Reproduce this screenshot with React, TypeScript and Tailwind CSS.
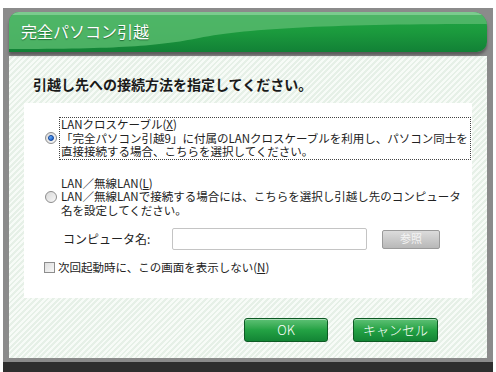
import React from "react";

const font = { fontFamily: '"Noto Sans CJK JP", "Noto Sans", sans-serif' };

function Radio({ checked }: { checked?: boolean }) {
  return (
    <div className="w-[12px] h-[12px] rounded-full border border-[#8d8d8d] bg-gradient-to-br from-[#d8d8d8] to-[#f8f8f8] flex items-center justify-center shrink-0">
      {checked && (
        <div className="w-[6px] h-[6px] rounded-full bg-gradient-to-br from-[#7fc0ff] to-[#0a55c8] border border-[#0a3f99]" />
      )}
    </div>
  );
}

export default function App() {
  return (
    <div className="w-[496px] h-[372px] bg-white overflow-hidden" style={font}>
      <div className="mt-[8px] ml-[3px] w-[490px] h-[364px] bg-[#8b8b8b] flex flex-col px-[6px] pt-[4px]">
        {/* title bar */}
        <div className="relative h-[40px] rounded-tl-[10px] rounded-tr-[14px] rounded-br-[10px] overflow-hidden bg-gradient-to-b from-[#22a646] via-[#1b9a3d] to-[#128136] shadow-[0_3px_3px_rgba(0,0,0,0.35)]">
          <svg className="absolute inset-0" width="480" height="40" viewBox="0 0 480 40" preserveAspectRatio="none">
            <path d="M0 0 H480 V12 C330 12 240 16 190 26 C150 34 110 37 0 37 Z" fill="#56b96c" opacity="0.85" />
            <path d="M0 0 H480 V3 H0 Z" fill="#8fd49f" opacity="0.7" />
          </svg>
          <div className="relative pl-[12px] pt-[7px] text-[16px] leading-[24px] text-white [text-shadow:0_1px_1px_rgba(0,60,20,0.6)]">
            完全パソコン引越
          </div>
        </div>

        {/* content */}
        <div className="mt-[4px] flex-1 bg-[repeating-linear-gradient(135deg,#f7fbf7_0px,#f7fbf7_2px,#e6f0e7_2px,#e6f0e7_4px)] flex flex-col">
          <div className="pl-[24px] pt-[18px] text-[14px] leading-[20px] font-bold text-[#1a1a1a]">
            引越し先への接続方法を指定してください。
          </div>

          <div className="mt-[9px] ml-[15px] mr-[15px] h-[195px] bg-white text-[11.5px] leading-[13.5px] text-[#222] flex flex-col">
            {/* option 1 */}
            <div className="mt-[14px] flex items-center">
              <div className="ml-[21px]">
                <Radio checked />
              </div>
              <div className="ml-[2px] mr-[1px] flex-1 border border-dotted border-[#444] px-[1px]">
                <div>LANクロスケーブル(<span className="underline">X</span>)</div>
                <div>「完全パソコン引越9」に付属のLANクロスケーブルを利用し、パソコン同士を</div>
                <div>直接接続する場合、こちらを選択してください。</div>
              </div>
            </div>

            {/* option 2 */}
            <div className="mt-[17px] flex items-center">
              <div className="ml-[21px]">
                <Radio />
              </div>
              <div className="ml-[3px] px-[1px]">
                <div>LAN／無線LAN(<span className="underline">L</span>)</div>
                <div>LAN／無線LANで接続する場合には、こちらを選択し引越し先のコンピュータ</div>
                <div>名を設定してください。</div>
              </div>
            </div>

            {/* computer name */}
            <div className="mt-[11px] flex items-center h-[22px]">
              <div className="ml-[39px] w-[109px] text-[12px]">コンピュータ名:</div>
              <div className="w-[195px] h-[22px] border border-[#c4c4c4] rounded-[2px] bg-white" />
              <div className="ml-[15px] w-[58px] h-[19px] border border-[#9a9a9a] rounded-[2px] bg-gradient-to-b from-[#dcdcdc] to-[#b8b8b8] flex items-center justify-center text-[11px] text-[#f4f4f4]">
                参照
              </div>
            </div>

            {/* checkbox */}
            <div className="mt-[11px] flex items-center">
              <div className="ml-[20px] w-[11px] h-[11px] border border-[#8d8d8d] bg-gradient-to-br from-[#dedede] to-[#f7f7f7]" />
              <div className="ml-[3px]">
                次回起動時に、この画面を表示しない(<span className="underline">N</span>)
              </div>
            </div>
          </div>

          {/* buttons */}
          <div className="mt-[20px] flex justify-end pr-[49px] gap-[25px]">
            <div className="w-[84px] h-[24px] rounded-[3px] border border-[#0d5a24] bg-gradient-to-b from-[#5cc175] via-[#23a244] to-[#138535] shadow-[inset_0_1px_0_rgba(255,255,255,0.5)] flex items-center justify-center text-white text-[13px] font-light">
              OK
            </div>
            <div className="w-[85px] h-[24px] rounded-[3px] border border-[#0d5a24] bg-gradient-to-b from-[#5cc175] via-[#23a244] to-[#138535] shadow-[inset_0_1px_0_rgba(255,255,255,0.5)] flex items-center justify-center text-white text-[13px] font-light">
              キャンセル
            </div>
          </div>
          <div className="flex-1" />
        </div>
        <div className="h-[4px] -mx-[6px] bg-[#8b8b8b]" />
        <div className="h-[10px] -mx-[6px] bg-[#2e2e2e]" />
      </div>
    </div>
  );
}
